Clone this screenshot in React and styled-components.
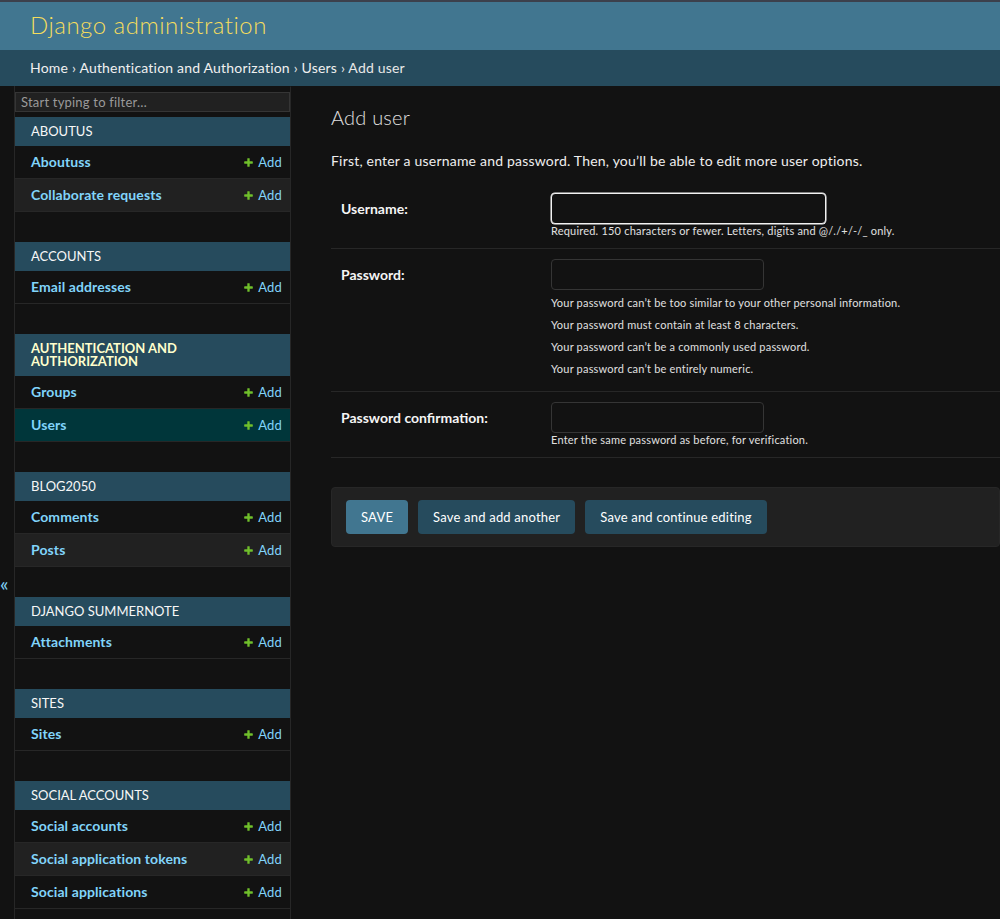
import styled, { createGlobalStyle } from "styled-components";

const GlobalStyle = createGlobalStyle`
  html, body {
    margin: 0;
    padding: 0;
    background: #121212;
    color: #eeeeee;
    font-family: Lato, "Open Sans", "Liberation Sans", sans-serif;
    font-size: 14px;
    letter-spacing: 0.2px;
  }
  * { box-sizing: border-box; }
`;

const Header = styled.header`
  background: #417690;
  border-top: 2px solid #3c404c;
  padding: 9px 30px 11px;
`;
const Branding = styled.h1`
  margin: 0;
  font-size: 24px;
  line-height: 28px;
  font-weight: 300;
  letter-spacing: 0.5px;
  color: #f5dd5d;
`;
const Crumbs = styled.nav`
  background: #264b5d;
  padding: 10px 30px;
  font-size: 14px;
  line-height: 16px;
  color: #e8e8e8;
`;
const Crumb = styled.span`
  color: #f0f0f0;
`;

const Main = styled.div`
  display: flex;
  align-items: stretch;
  min-height: calc(100vh - 86px);
`;
const Toggle = styled.div`
  flex: 0 0 15px;
  border-right: 1px solid #272727;
  color: #81d4fa;
  font-size: 20px;
  line-height: 24px;
  padding-top: 485px;
`;
const Sidebar = styled.nav`
  flex: 0 0 276px;
  border-right: 1px solid #272727;
  border-top: 1px solid transparent;
`;
const Filter = styled.input`
  display: block;
  width: 100%;
  height: 20px;
  margin: 5px 0;
  padding: 0 5px;
  border: 1px solid #353535;
  background: #212121;
  color: #eee;
  font-family: inherit;
  font-size: 13px;
  letter-spacing: 0.2px;
  &::placeholder { color: #9a9a9a; }
`;
const Module = styled.section`
  margin-bottom: 30px;
`;
const Caption = styled.div`
  background: #264b5d;
  padding: 8px 8px 8px 16px;
  font-size: 13px;
  line-height: 13px;
  letter-spacing: 0;
  color: ${(p) => (p.$current ? "#ffffcc" : "#f7f7f7")};
  font-weight: ${(p) => (p.$current ? 700 : 400)};
`;
const ModelRow = styled.div`
  display: flex;
  align-items: center;
  justify-content: space-between;
  padding: 8px 8px 8px 16px;
  height: 33px;
  line-height: 16px;
  font-size: 13px;
  border-bottom: 1px solid #272727;
  background: ${(p) => (p.$selected ? "#00363a" : p.$even ? "#212121" : "transparent")};
`;
const ModelName = styled.a`
  color: #81d4fa;
  font-size: 14px;
  font-weight: 700;
  letter-spacing: 0.1px;
  text-decoration: none;
`;
const AddLink = styled.a`
  display: flex;
  align-items: center;
  gap: 4px;
  color: #81d4fa;
  text-decoration: none;
`;

const Content = styled.main`
  flex: 1;
  min-width: 0;
  padding: 20px 0 20px 40px;
`;
const Title = styled.h1`
  margin: 0 0 22px;
  font-size: 20px;
  line-height: 23px;
  font-weight: 300;
  color: #e0e0e0;
`;
const Intro = styled.p`
  margin: 0 0 12px;
  font-size: 14px;
  line-height: 20px;
`;
const FormRow = styled.div`
  display: grid;
  grid-template-columns: 210px 1fr;
  padding: 10px;
  border-bottom: 1px solid #272727;
`;
const Label = styled.label`
  padding-top: 6px;
  font-weight: 700;
  font-size: 14px;
  line-height: 20px;
  letter-spacing: 0;
  color: #f5f5f5;
`;
const Field = styled.div`
  display: flex;
  flex-direction: column;
  align-items: flex-start;
`;
const Input = styled.input`
  width: ${(p) => p.$width}px;
  height: 31px;
  padding: 5px 6px;
  border: 1px solid ${(p) => (p.$focused ? "#f2f2f2" : "#353535")};
  box-shadow: ${(p) => (p.$focused ? "0 0 0 0.5px #f2f2f2" : "none")};
  border-radius: 4px;
  background: #121212;
  color: #eee;
  outline: none;
`;
const Help = styled.div`
  font-size: 11px;
  line-height: 14px;
  color: #e0e0e0;
`;
const HelpList = styled.ul`
  list-style: none;
  margin: 6px 0 5px;
  padding: 0;
  display: flex;
  flex-direction: column;
  gap: 8px;
  font-size: 11px;
  line-height: 14px;
  color: #e0e0e0;
`;
const SubmitRow = styled.div`
  display: flex;
  gap: 10px;
  margin-top: 29px;
  padding: 12px 14px;
  background: #212121;
  border: 1px solid #272727;
  border-radius: 4px;
`;
const Button = styled.button`
  height: 34px;
  padding: 0 15px;
  border: 0;
  border-radius: 4px;
  background: ${(p) => (p.$default ? "#417690" : "#264b5d")};
  color: #fff;
  font-family: inherit;
  font-size: 13px;
  letter-spacing: 0.2px;
  cursor: pointer;
`;

const PlusIcon = () => (
  <svg width="11" height="11" viewBox="0 0 1792 1792">
    <path
      fill="#70bf2b"
      d="M1600 796v192q0 40-28 68t-68 28h-416v416q0 40-28 68t-68 28h-192q-40 0-68-28t-28-68v-416h-416q-40 0-68-28t-28-68v-192q0-40 28-68t68-28h416v-416q0-40 28-68t68-28h192q40 0 68 28t28 68v416h416q40 0 68 28t28 68z"
    />
  </svg>
);

const apps = [
  { name: "ABOUTUS", models: ["Aboutuss", "Collaborate requests"] },
  { name: "ACCOUNTS", models: ["Email addresses"] },
  { name: "AUTHENTICATION AND AUTHORIZATION", current: true, models: ["Groups", "Users"] },
  { name: "BLOG2050", models: ["Comments", "Posts"] },
  { name: "DJANGO SUMMERNOTE", models: ["Attachments"] },
  { name: "SITES", models: ["Sites"] },
  {
    name: "SOCIAL ACCOUNTS",
    models: ["Social accounts", "Social application tokens", "Social applications"],
  },
];

const passwordHelp = [
  "Your password can’t be too similar to your other personal information.",
  "Your password must contain at least 8 characters.",
  "Your password can’t be a commonly used password.",
  "Your password can’t be entirely numeric.",
];

const App = () => {
  return (
    <>
      <GlobalStyle />
      <Header>
        <Branding>Django administration</Branding>
      </Header>
      <Crumbs>
        <Crumb>Home</Crumb> › <Crumb>Authentication and Authorization</Crumb> ›{" "}
        <Crumb>Users</Crumb> › Add user
      </Crumbs>
      <Main>
        <Toggle>«</Toggle>
        <Sidebar>
          <Filter placeholder="Start typing to filter…" />
          {apps.map((app) => (
            <Module key={app.name}>
              <Caption $current={app.current}>{app.name}</Caption>
              {app.models.map((m, i) => (
                <ModelRow key={m} $even={i % 2 === 1} $selected={m === "Users"}>
                  <ModelName href="#">{m}</ModelName>
                  <AddLink href="#">
                    <PlusIcon />
                    Add
                  </AddLink>
                </ModelRow>
              ))}
            </Module>
          ))}
        </Sidebar>
        <Content>
          <Title>Add user</Title>
          <Intro>First, enter a username and password. Then, you’ll be able to edit more user options.</Intro>
          <form onSubmit={(e) => e.preventDefault()}>
            <FormRow>
              <Label>Username:</Label>
              <Field>
                <Input $width={275} $focused />
                <Help>Required. 150 characters or fewer. Letters, digits and @/./+/-/_ only.</Help>
              </Field>
            </FormRow>
            <FormRow>
              <Label>Password:</Label>
              <Field>
                <Input $width={213} type="password" />
                <HelpList>
                  {passwordHelp.map((t) => (
                    <li key={t}>{t}</li>
                  ))}
                </HelpList>
              </Field>
            </FormRow>
            <FormRow>
              <Label>Password confirmation:</Label>
              <Field>
                <Input $width={213} type="password" />
                <Help>Enter the same password as before, for verification.</Help>
              </Field>
            </FormRow>
            <SubmitRow>
              <Button $default>SAVE</Button>
              <Button>Save and add another</Button>
              <Button>Save and continue editing</Button>
            </SubmitRow>
          </form>
        </Content>
      </Main>
    </>
  );
};

export default App;
